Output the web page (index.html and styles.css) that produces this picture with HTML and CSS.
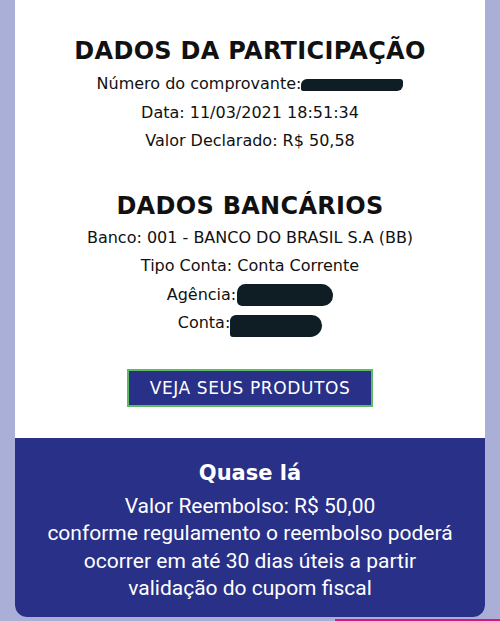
FILE: index.html
```html
<!DOCTYPE html>
<html lang="pt-BR">
<head>
    <meta charset="UTF-8">
    <meta name="viewport" content="width=device-width, initial-scale=1.0">
    <title>Dados da Participação</title>
    <link rel="stylesheet" href="styles.css">
</head>
<body>
    <div class="card">
        <div class="details">
            <h2>DADOS DA PARTICIPAÇÃO</h2>
            <p>Número do comprovante:<span class="redact redact-num"></span></p>
            <p>Data: 11/03/2021 18:51:34</p>
            <p>Valor Declarado: R$ 50,58</p>

            <h2 class="bank-title">DADOS BANCÁRIOS</h2>
            <p>Banco: 001 - BANCO DO BRASIL S.A (BB)</p>
            <p>Tipo Conta: Conta Corrente</p>
            <p>Agência:<span class="redact redact-ag"></span></p>
            <p>Conta:<span class="redact redact-conta"></span></p>

            <button class="products-btn">VEJA SEUS PRODUTOS</button>
        </div>
        <div class="summary">
            <h3>Quase lá</h3>
            <p>Valor Reembolso: R$ 50,00<br>
            conforme regulamento o reembolso poderá<br>
            ocorrer em até 30 dias úteis a partir<br>
            validação do cupom fiscal</p>
        </div>
    </div>
    <div class="nav-indicator"></div>
</body>
</html>
```

FILE: styles.css
```css
body {
    margin: 0;
    background-color: #a9afd6;
    font-family: "DejaVu Sans", sans-serif;
    color: #111;
}
.card {
    margin: 0 15px;
    background: #fff;
    border-radius: 0 0 12px 12px;
    overflow: hidden;
}
.details {
    padding: 37px 0 31px;
    text-align: center;
}
.details h2 {
    margin: 0 0 5px;
    font-size: 24px;
    font-weight: bold;
    letter-spacing: 0.3px;
}
.details h2.bank-title {
    margin-top: 36px;
    margin-bottom: 4px;
}
.details p {
    margin: 0;
    font-size: 16px;
    line-height: 28.5px;
}
.redact {
    display: inline-block;
    vertical-align: middle;
    background: #0f1d24;
}
.redact-num {
    width: 102px;
    height: 12px;
    border-radius: 6px 3px 6px 2px;
}
.redact-ag {
    width: 96px;
    height: 22px;
    border-radius: 10px 14px 12px 6px;
    margin-left: 1px;
}
.redact-conta {
    width: 92px;
    height: 22px;
    border-radius: 8px 14px 16px 4px;
    margin-top: 4px;
}
.products-btn {
    margin-top: 31px;
    width: 246px;
    height: 38px;
    background-color: #283087;
    border: 2px solid #5dbb63;
    color: #fff;
    font-family: "DejaVu Sans", sans-serif;
    font-size: 17px;
    letter-spacing: 0.6px;
}
.summary {
    background-color: #283087;
    color: #fff;
    text-align: center;
    padding: 23px 0 14px;
    font-family: Roboto, sans-serif;
}
.summary h3 {
    margin: 0 0 8px;
    font-family: "DejaVu Sans", sans-serif;
    font-size: 21px;
    font-weight: bold;
}
.summary p {
    margin: 0;
    font-size: 21px;
    line-height: 27.5px;
}
.nav-indicator {
    margin: 2px 0 0 335px;
    height: 2px;
    background: #e0147d;
}
```
